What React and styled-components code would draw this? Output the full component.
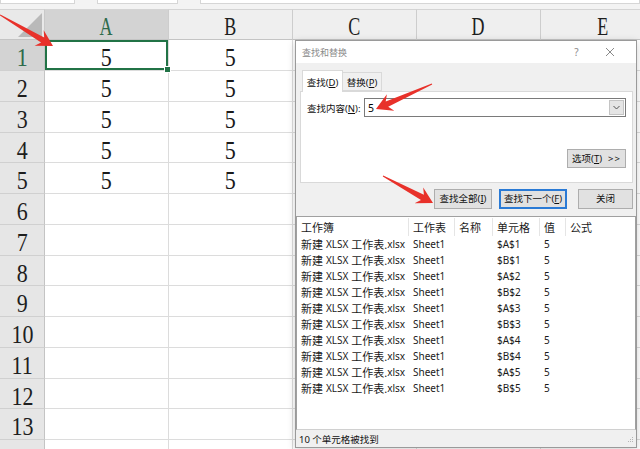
import React from "react";
import styled, { createGlobalStyle } from "styled-components";

const GlobalStyle = createGlobalStyle`
  html, body { margin: 0; padding: 0; background: #fff; overflow: hidden; }
`;

const COLS = ["A", "B", "C", "D", "E"];
const ROW_HEIGHTS = Array.from({ length: 14 }, (_, i) => (i % 4 === 3 ? 30 : 31));
const RESULTS = ["$A$1", "$B$1", "$A$2", "$B$2", "$A$3", "$B$3", "$A$4", "$B$4", "$A$5", "$B$5"];

const Screen = styled.div`
  position: relative;
  width: 640px;
  height: 449px;
  overflow: hidden;
  background: #fff;
`;

const TopStrip = styled.div`
  height: 9px;
  background: #f3f3f3;
  display: flex;
  gap: 22px;
  align-items: flex-start;
`;

const FormulaBox = styled.div`
  width: ${(p) => p.$w}px;
  height: 3px;
  background: #fff;
  border: 1px solid #d6d6d6;
  border-top: none;
`;

const Sheet = styled.div`
  display: grid;
  grid-template-columns: 45px repeat(5, 124px);
  grid-template-rows: ${(p) => p.$rows};
  font-family: "Liberation Serif", "DejaVu Serif", serif;
`;

const Corner = styled.div`
  position: relative;
  background: #e9e9e9;
  border-right: 1px solid #c9c9c9;
  border-bottom: 1px solid #c4c4c4;
  border-top: 1px solid #d4d4d4;
  svg { position: absolute; right: 2px; bottom: 2px; }
`;

const Glyph = styled.span`
  display: inline-block;
  line-height: 1;
  transform: scaleX(${(p) => p.$sx || 0.88});
`;

const ColHead = styled.div`
  display: flex;
  align-items: center;
  justify-content: center;
  padding-top: 3px;
  font-size: 25px;
  background: ${(p) => (p.$sel ? "#d3d3d3" : "#efefef")};
  color: ${(p) => (p.$sel ? "#2e6b4b" : "#1e1e1e")};
  border-right: 1px solid #cdcdcd;
  border-bottom: 1px solid #c4c4c4;
  border-top: 1px solid #d4d4d4;
`;

const RowHead = styled.div`
  display: flex;
  align-items: center;
  justify-content: center;
  padding-top: 5px;
  font-size: 25px;
  background: ${(p) => (p.$sel ? "#d3d3d3" : "#e6e6e6")};
  color: ${(p) => (p.$sel ? "#2e6b4b" : "#1e1e1e")};
  border-right: 1px solid #c4c4c4;
  border-bottom: 1px solid #d0d0d0;
`;

const Cell = styled.div`
  position: relative;
  display: flex;
  align-items: center;
  justify-content: center;
  padding-top: 5px;
  font-size: 25px;
  color: #1a1a1a;
  border-right: 1px solid #dcdcdc;
  border-bottom: 1px solid #dcdcdc;
  ${(p) =>
    p.$sel &&
    `
    box-shadow: inset 0 0 0 2px #217346;
    &::after {
      content: "";
      position: absolute;
      right: -3px;
      bottom: -3px;
      width: 5px;
      height: 5px;
      background: #217346;
      border: 1px solid #fff;
      z-index: 2;
    }
  `}
`;

/* ---------- dialog ---------- */

const Dialog = styled.div`
  position: absolute;
  left: 295px;
  top: 40px;
  width: 342px;
  height: 408px;
  box-sizing: border-box;
  border: 1px solid #9a9a9a;
  background: #f0f0f0;
  box-shadow: 0 2px 8px rgba(0, 0, 0, 0.18);
  display: flex;
  flex-direction: column;
  font-family: "Noto Sans", "Noto Sans CJK SC", sans-serif;
`;

const TitleBar = styled.div`
  height: 22px;
  flex: none;
  background: #fff;
  display: flex;
  align-items: center;
  padding: 0 10px 0 6px;
  font-size: 9px;
  color: #8a8a8a;
`;

const Title = styled.span`
  flex: 1;
`;

const TitleBtn = styled.span`
  width: 33px;
  display: flex;
  justify-content: center;
  color: #8a8a8a;
  font-size: 10px;
`;

const Body = styled.div`
  padding: 7px 3px 0 4px;
  display: flex;
  flex-direction: column;
  flex: 1;
  min-height: 0;
`;

const Tabs = styled.div`
  display: flex;
  align-items: flex-end;
  padding-left: 2px;
  height: 22px;
  position: relative;
  z-index: 1;
`;

const Tab = styled.div`
  box-sizing: border-box;
  height: ${(p) => (p.$active ? 22 : 19)}px;
  width: ${(p) => (p.$active ? 41 : 39)}px;
  margin-bottom: ${(p) => (p.$active ? 0 : 1)}px;
  display: flex;
  align-items: center;
  justify-content: center;
  font-size: 9.5px;
  color: #111;
  white-space: nowrap;
  background: ${(p) => (p.$active ? "#fff" : "#f0f0f0")};
  border: 1px solid #d9d9d9;
  border-bottom: ${(p) => (p.$active ? "none" : "1px solid #d9d9d9")};
  border-left: ${(p) => (p.$active ? "1px solid #d9d9d9" : "none")};
`;

const Panel = styled.div`
  box-sizing: border-box;
  height: 92px;
  margin-top: -1px;
  background: #fff;
  border: 1px solid #d9d9d9;
  padding: 6px 6px 0 6px;
  display: flex;
  flex-direction: column;
`;

const FindRow = styled.div`
  display: flex;
  align-items: center;
  height: 19px;
`;

const Label = styled.span`
  width: 57px;
  font-size: 9.5px;
  color: #111;
  white-space: nowrap;
`;

const Combo = styled.div`
  flex: 1;
  height: 19px;
  box-sizing: border-box;
  border: 1px solid #7a7a7a;
  display: flex;
  align-items: stretch;
`;

const ComboText = styled.div`
  flex: 1;
  font-size: 10.5px;
  padding-left: 3px;
  display: flex;
  align-items: center;
  color: #000;
`;

const ComboArrow = styled.div`
  width: 13px;
  margin: 1px;
  background: #e5e5e5;
  border: 1px solid #c4c4c4;
  display: flex;
  align-items: center;
  justify-content: center;
`;

const Button = styled.button`
  box-sizing: border-box;
  height: ${(p) => p.$h || 20}px;
  width: ${(p) => p.$w}px;
  padding: 0;
  font-family: inherit;
  font-size: 9.5px;
  line-height: 1;
  white-space: nowrap;
  color: #111;
  background: #e1e1e1;
  border: ${(p) => (p.$default ? "2px solid #2a7ad5" : "1px solid #adadad")};
  text-align: center;
`;

const OptionsButton = styled(Button)`
  align-self: flex-end;
  margin-top: 32px;
  span + span { margin-left: 6px; letter-spacing: 1px; }
`;

const ButtonRow = styled.div`
  display: flex;
  justify-content: flex-end;
  margin-top: 6px;
  height: 20px;
`;

const Gap = styled.div`
  width: ${(p) => p.$w}px;
`;

const List = styled.div`
  margin: 7px -3px 0 -4px;
  height: 214px;
  box-sizing: border-box;
  background: #fff;
  border: 1px solid #a0a0a0;
  border-bottom: 1px solid #d0d0d0;
  padding-top: 1px;
  font-size: 11px;
  color: #1a1a1a;
`;

const ListRow = styled.div`
  display: grid;
  grid-template-columns: 112px 46px 38px 47px 26px 1fr;
  height: ${(p) => (p.$head ? 18 : 16)}px;
  align-items: center;
  line-height: 1;
`;

const ListCell = styled.div`
  padding-left: 4px;
  height: 100%;
  display: flex;
  align-items: center;
  white-space: nowrap;
  overflow: hidden;
  border-right: ${(p) => (p.$head && !p.$last ? "1px solid #e5e5e5" : "none")};
  small { font-size: 10px; }
`;

const StatusBar = styled.div`
  height: 17px;
  margin: 0 -3px 0 -4px;
  display: flex;
  align-items: center;
  justify-content: space-between;
  padding: 0 2px 0 3px;
  font-size: 9.5px;
  color: #111;
  background: #f0f0f0;
`;

const ArrowLayer = styled.svg`
  position: absolute;
  left: 0;
  top: 0;
  pointer-events: none;
`;

function arrowPoints([x1, y1], [x2, y2], head = 16, wing = 9) {
  const len = Math.hypot(x2 - x1, y2 - y1);
  const dx = (x2 - x1) / len;
  const dy = (y2 - y1) / len;
  const nx = -dy;
  const ny = dx;
  const bx = x2 - dx * head;
  const by = y2 - dy * head;
  const nbx = x2 - dx * (head - 4);
  const nby = y2 - dy * (head - 4);
  const pts = [
    [x1 + nx * 0.5, y1 + ny * 0.5],
    [nbx + nx * 3, nby + ny * 3],
    [bx + nx * wing, by + ny * wing],
    [x2, y2],
    [bx - nx * wing, by - ny * wing],
    [nbx - nx * 3, nby - ny * 3],
    [x1 - nx * 0.5, y1 - ny * 0.5],
  ];
  return pts.map((p) => p.map((v) => v.toFixed(1)).join(",")).join(" ");
}

const ARROWS = [
  [[0, 15], [53, 46]],
  [[432, 84], [376, 109]],
  [[383, 176], [433, 203]],
];

function Chevron() {
  return (
    <svg width="7" height="5" viewBox="0 0 7 5">
      <path d="M0.5 1 L3.5 4 L6.5 1" fill="none" stroke="#555" strokeWidth="1" />
    </svg>
  );
}

export default function App() {
  const rows = ["31px", ...ROW_HEIGHTS.map((h) => `${h}px`)].join(" ");
  return (
    <Screen>
      <GlobalStyle />
      <TopStrip>
        <FormulaBox $w={77} />
        <FormulaBox $w={82} />
        <FormulaBox $w={460} />
      </TopStrip>
      <Sheet $rows={rows}>
        <Corner>
          <svg width="24" height="24" viewBox="0 0 24 24">
            <polygon points="24,0 24,24 0,24" fill="#b9b9b9" />
          </svg>
        </Corner>
        {COLS.map((c) => (
          <ColHead key={c} $sel={c === "A"}>
            <Glyph $sx={0.72}>{c}</Glyph>
          </ColHead>
        ))}
        {ROW_HEIGHTS.map((_, i) => (
          <React.Fragment key={i}>
            <RowHead $sel={i === 0}>{i < 13 && <Glyph>{i + 1}</Glyph>}</RowHead>
            {COLS.map((c, j) => (
              <Cell key={c} $sel={i === 0 && j === 0}>
                {i < 5 && j < 2 && <Glyph>5</Glyph>}
              </Cell>
            ))}
          </React.Fragment>
        ))}
      </Sheet>

      <Dialog>
        <TitleBar>
          <Title>查找和替换</Title>
          <TitleBtn>?</TitleBtn>
          <TitleBtn>
            <svg width="10" height="10" viewBox="0 0 10 10">
              <path d="M1 1 L9 9 M9 1 L1 9" stroke="#8a8a8a" strokeWidth="1" />
            </svg>
          </TitleBtn>
        </TitleBar>
        <Body>
          <Tabs>
            <Tab $active>
              <span>
                查找(<u>D</u>)
              </span>
            </Tab>
            <Tab>
              <span>
                替换(<u>P</u>)
              </span>
            </Tab>
          </Tabs>
          <Panel>
            <FindRow>
              <Label>
                查找内容(<u>N</u>):
              </Label>
              <Combo>
                <ComboText>5</ComboText>
                <ComboArrow>
                  <Chevron />
                </ComboArrow>
              </Combo>
            </FindRow>
            <OptionsButton $w={59} $h={19}>
              <span>
                选项(<u>T</u>)
              </span>
              <span>&gt;&gt;</span>
            </OptionsButton>
          </Panel>
          <ButtonRow>
            <Button $w={58}>
              <span>
                查找全部(<u>I</u>)
              </span>
            </Button>
            <Gap $w={7} />
            <Button $w={68} $default>
              <span>
                查找下一个(<u>F</u>)
              </span>
            </Button>
            <Gap $w={11} />
            <Button $w={55}>关闭</Button>
          </ButtonRow>
          <List>
            <ListRow $head>
              {["工作簿", "工作表", "名称", "单元格", "值", "公式"].map((h, k) => (
                <ListCell key={h} $head $last={k === 5}>
                  {h}
                </ListCell>
              ))}
            </ListRow>
            {RESULTS.map((addr) => (
              <ListRow key={addr}>
                <ListCell>
                  新建&nbsp;<small>XLSX</small>&nbsp;工作表.<small>xlsx</small>
                </ListCell>
                <ListCell>
                  <small>Sheet1</small>
                </ListCell>
                <ListCell />
                <ListCell>
                  <small>{addr}</small>
                </ListCell>
                <ListCell>
                  <small>5</small>
                </ListCell>
                <ListCell />
              </ListRow>
            ))}
          </List>
          <StatusBar>
            <span>10 个单元格被找到</span>
            <svg width="8" height="8" viewBox="0 0 8 8">
              <g fill="#b5b5b5">
                <rect x="6" y="2" width="1" height="1" />
                <rect x="4" y="4" width="1" height="1" />
                <rect x="6" y="4" width="1" height="1" />
                <rect x="2" y="6" width="1" height="1" />
                <rect x="4" y="6" width="1" height="1" />
                <rect x="6" y="6" width="1" height="1" />
              </g>
            </svg>
          </StatusBar>
        </Body>
      </Dialog>

      <ArrowLayer width="640" height="449" viewBox="0 0 640 449">
        {ARROWS.map(([a, b], i) => (
          <polygon key={i} points={arrowPoints(a, b)} fill="#e8312a" />
        ))}
      </ArrowLayer>
    </Screen>
  );
}
